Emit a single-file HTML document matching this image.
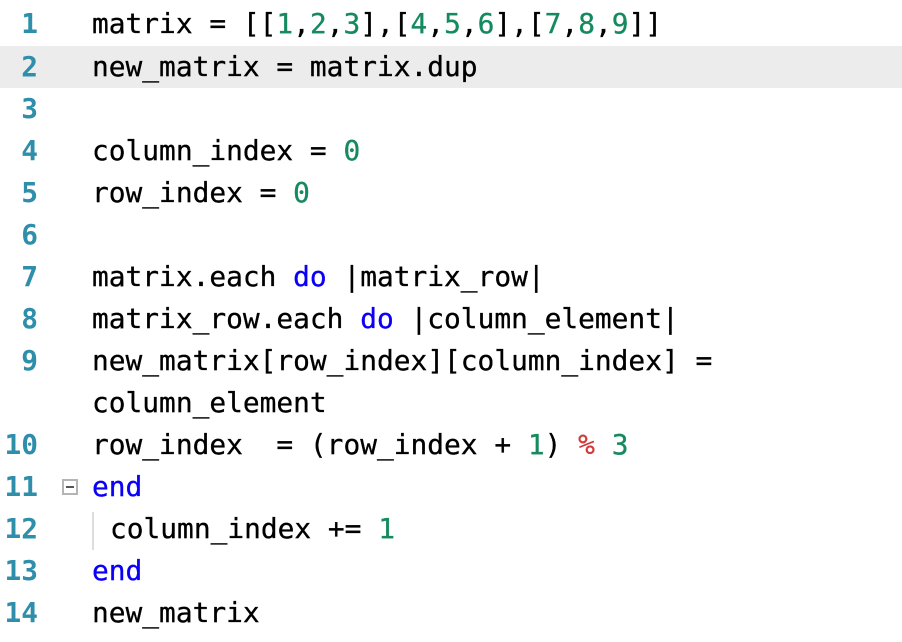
<!DOCTYPE html>
<html><head><meta charset="utf-8"><style>
html,body{margin:0;padding:0;background:#fff;width:902px;height:642px;overflow:hidden}
.r{position:absolute;left:0;width:902px;height:42px;line-height:42px;font-family:"DejaVu Sans Mono","Liberation Mono",monospace;font-size:27.85px;color:#000;white-space:pre;-webkit-text-stroke:0.3px currentColor}
.n{position:absolute;right:864px;color:#2f8fab;text-align:right;font-weight:bold;-webkit-text-stroke:0}
.c{position:absolute;left:92px}
.g{color:#168a5f}.k{color:#0a00f5}.p{color:#d13a3a}
.hl{background:#ececec}
</style></head><body>
<div class="r" style="top:3px"><span class="n">1</span><span class="c">matrix = [[<span class="g">1</span>,<span class="g">2</span>,<span class="g">3</span>],[<span class="g">4</span>,<span class="g">5</span>,<span class="g">6</span>],[<span class="g">7</span>,<span class="g">8</span>,<span class="g">9</span>]]</span></div>
<div class="r hl" style="top:46px"><span class="n">2</span><span class="c">new_matrix = matrix.dup</span></div>
<div class="r" style="top:88px"><span class="n">3</span></div>
<div class="r" style="top:130px"><span class="n">4</span><span class="c">column_index = <span class="g">0</span></span></div>
<div class="r" style="top:172px"><span class="n">5</span><span class="c">row_index = <span class="g">0</span></span></div>
<div class="r" style="top:214px"><span class="n">6</span></div>
<div class="r" style="top:256px"><span class="n">7</span><span class="c">matrix.each <span class="k">do</span> |matrix_row|</span></div>
<div class="r" style="top:298px"><span class="n">8</span><span class="c">matrix_row.each <span class="k">do</span> |column_element|</span></div>
<div class="r" style="top:340px"><span class="n">9</span><span class="c">new_matrix[row_index][column_index] =</span></div>
<div class="r" style="top:382px"><span class="c">column_element</span></div>
<div class="r" style="top:424px"><span class="n">10</span><span class="c">row_index  = (row_index + <span class="g">1</span>) <span class="p">%</span> <span class="g">3</span></span></div>
<div class="r" style="top:466px"><span class="n">11</span><span style="position:absolute;left:62px;top:13px;width:16px;height:16px;border:2px solid #b5b5b5;box-sizing:border-box"><span style="position:absolute;left:2px;top:5px;width:8px;height:2px;background:#555"></span></span><span class="c k">end</span></div>
<div class="r" style="top:508px"><span class="n">12</span><span style="position:absolute;left:92px;top:4px;width:2px;height:38px;background:#ddd"></span><span class="c" style="left:110px">column_index += <span class="g">1</span></span></div>
<div class="r" style="top:550px"><span class="n">13</span><span class="c k">end</span></div>
<div class="r" style="top:592px"><span class="n">14</span><span class="c">new_matrix</span></div>
</body></html>
